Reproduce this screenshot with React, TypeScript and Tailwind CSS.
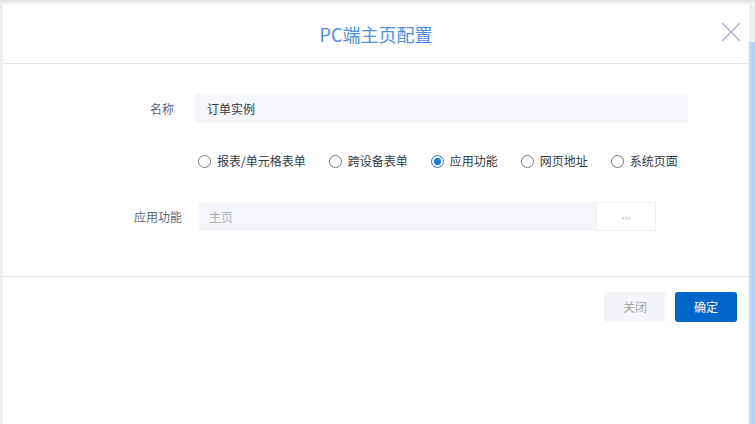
import React from "react";

const font = { fontFamily: '"Noto Sans CJK SC", "Noto Sans", sans-serif' };

const OPTIONS = ["报表/单元格表单", "跨设备表单", "应用功能", "网页地址", "系统页面"];
const CHECKED = "应用功能";

function Radio({ label, checked }: { label: string; checked?: boolean }) {
  return (
    <label className="flex items-center gap-[6px] text-[12px] text-[#333a45] cursor-pointer">
      {checked ? (
        <span className="w-[13px] h-[13px] rounded-full border border-[#1a73e8] flex items-center justify-center">
          <span className="w-[7px] h-[7px] rounded-full bg-[#1a73e8]" />
        </span>
      ) : (
        <span className="w-[13px] h-[13px] rounded-full border border-[#767676] bg-white" />
      )}
      <span>{label}</span>
    </label>
  );
}

export default function App() {
  return (
    <div className="w-[755px] h-[424px] bg-[#efefef] flex flex-col overflow-hidden" style={font}>
      <div className="h-[5px] shrink-0 bg-gradient-to-b from-[#e2e2e2] to-[#fbfbfb]" />
      <div className="flex flex-1">
        <div className="w-[3px] bg-[#efefef]" />

        {/* dialog */}
        <div className="w-[746px] bg-white flex flex-col">
          <header className="h-[59px] shrink-0 flex items-center justify-center relative border-b border-[#e3e8f0]">
            <h1 className="text-[18px] text-[#4a8fe0] font-normal">PC端主页配置</h1>
            <button className="absolute right-[8px] top-[17px] w-[20px] h-[20px]">
              <svg viewBox="0 0 20 20" className="w-[20px] h-[20px]" fill="none" stroke="#a9a9c9" strokeWidth="1.3">
                <path d="M1 1 L19 19 M19 1 L1 19" />
              </svg>
            </button>
          </header>

          <div className="h-[213px] shrink-0 border-b border-[#e3e8f0]">
            <div className="flex items-center mt-[30px]">
              <span className="w-[171px] text-right text-[12px] text-[#5a6478]">名称</span>
              <div className="ml-[20px] w-[494px] h-[29px] bg-[#f4f6fa] rounded-[2px] flex items-center pl-[13px] text-[12px] text-[#333a45]">
                订单实例
              </div>
            </div>

            <div className="flex items-center ml-[195px] mt-[29px] gap-[23px]">
              {OPTIONS.map((o) => (
                <Radio key={o} label={o} checked={o === CHECKED} />
              ))}
            </div>

            <div className="flex items-center mt-[32px]">
              <span className="w-[179px] text-right text-[12px] text-[#5a6478]">应用功能</span>
              <div className="ml-[16px] w-[398px] h-[29px] bg-[#f4f6fa] rounded-l-[2px] flex items-center pl-[11px] text-[12px] text-[#a9adb5]">
                主页
              </div>
              <button className="w-[60px] h-[29px] bg-white border border-[#eef0f4] text-[11px] text-[#9aa0aa] leading-none pb-[4px]">
                ...
              </button>
            </div>
          </div>

          <footer className="flex justify-end gap-[9px] pr-[12px] pt-[15px]">
            <button className="w-[62px] h-[30px] rounded-[3px] bg-[#f3f5f8] text-[12px] text-[#a6a6a6]">关闭</button>
            <button className="w-[62px] h-[30px] rounded-[3px] bg-[#0066cc] text-[12px] text-white">确定</button>
          </footer>
        </div>

        <div className="flex-1 flex flex-col">
          <div className="h-[37px] bg-[#eeeeee]" />
          <div className="flex-1 bg-gradient-to-r from-[#c6dcf5] to-[#a9cdf7]" />
        </div>
      </div>
    </div>
  );
}
